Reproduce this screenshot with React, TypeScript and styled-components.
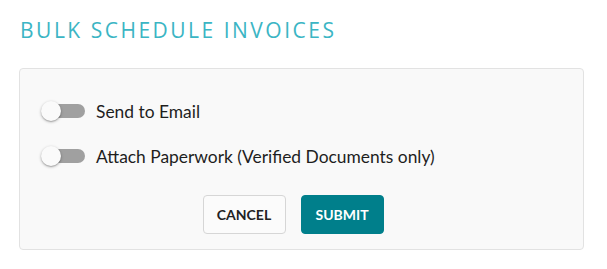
import React, { useState } from "react"
import styled, { createGlobalStyle } from "styled-components"

const GlobalStyle = createGlobalStyle`
  html, body {
    margin: 0;
    padding: 0;
    background: #ffffff;
  }
  body {
    font-family: Lato, "Open Sans", sans-serif;
  }
`

const Page = styled.div`
  width: 607px;
  padding: 0 23px 0 19px;
  box-sizing: border-box;
`

const Title = styled.h1`
  margin: 0;
  padding-top: 17px;
  height: 68px;
  box-sizing: border-box;
  font-family: "Open Sans", sans-serif;
  font-weight: 400;
  font-size: 21px;
  line-height: 26px;
  letter-spacing: 2.5px;
  color: #3bb5c4;
  padding-left: 1px;
`

const Card = styled.div`
  background: #f9f9f9;
  border: 1px solid #e2e2e2;
  border-radius: 4px;
  padding: 23px 15px 15px 21px;
  display: flex;
  flex-direction: column;
  gap: 7px;
`

const Row = styled.label`
  display: flex;
  align-items: center;
  height: 38px;
  cursor: pointer;
  font-size: 17.4px;
  color: #1e1e1e;
`

const SwitchBox = styled.span`
  position: relative;
  width: 44px;
  height: 20px;
  margin-right: 11px;
  flex: none;
`

const Track = styled.span<{ $on: boolean }>`
  position: absolute;
  left: 10px;
  top: 3px;
  width: 34px;
  height: 14px;
  border-radius: 7px;
  background: ${(p) => (p.$on ? "#7fc3cb" : "#a0a0a0")};
`

const Thumb = styled.span<{ $on: boolean }>`
  position: absolute;
  top: 0;
  left: ${(p) => (p.$on ? "24px" : "0")};
  width: 20px;
  height: 20px;
  border-radius: 50%;
  background: ${(p) => (p.$on ? "#007f8b" : "#fafafa")};
  box-shadow: 0 1px 3px rgba(0, 0, 0, 0.3), 0 1px 1px rgba(0, 0, 0, 0.14);
`

const Actions = styled.div`
  display: flex;
  justify-content: center;
  margin-top: 13px;
  padding-right: 8px;
`

const Button = styled.button<{ $primary?: boolean }>`
  height: 39px;
  padding: 0 13px;
  min-width: 83px;
  margin-right: 15px;
  border-radius: 4px;
  font-family: Lato, sans-serif;
  font-weight: 700;
  font-size: 14px;
  text-transform: uppercase;
  cursor: pointer;
  border: 1px solid ${(p) => (p.$primary ? "#007f8b" : "#d6d6d6")};
  background: ${(p) => (p.$primary ? "#007f8b" : "#fbfbfb")};
  color: ${(p) => (p.$primary ? "#ffffff" : "#222222")};
`

const Toggle = (props: { label: string }) => {
  const [on, setOn] = useState(false)
  return (
    <Row onClick={() => setOn(!on)}>
      <SwitchBox>
        <Track $on={on} />
        <Thumb $on={on} />
      </SwitchBox>
      {props.label}
    </Row>
  )
}

export default function App() {
  return (
    <Page>
      <GlobalStyle />
      <Title>BULK SCHEDULE INVOICES</Title>
      <Card>
        <Toggle label="Send to Email" />
        <Toggle label="Attach Paperwork (Verified Documents only)" />
        <Actions>
          <Button>Cancel</Button>
          <Button $primary>Submit</Button>
        </Actions>
      </Card>
    </Page>
  )
}
